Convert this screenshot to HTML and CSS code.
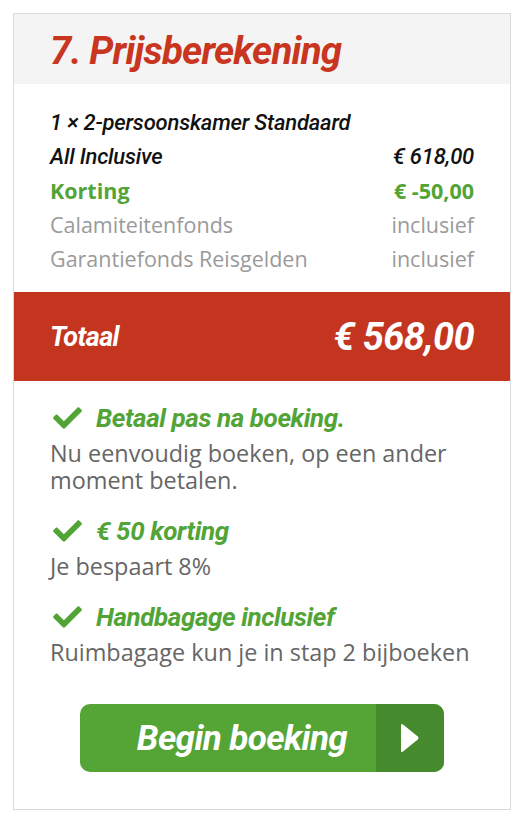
FILE: index.html
```html
<!DOCTYPE html>
<html lang="nl">
<head>
<meta charset="utf-8">
<title>Prijsberekening</title>
<link rel="stylesheet" href="styles.css">
</head>
<body>
<div class="page">
  <section class="card">
    <header class="card-head">
      <h2 class="title">7. Prijsberekening</h2>
    </header>
    <div class="lines">
      <div class="row strong"><span>1 × 2-persoonskamer Standaard</span></div>
      <div class="row strong"><span>All Inclusive</span><span>€ 618,00</span></div>
      <div class="row discount"><span>Korting</span><span>€ -50,00</span></div>
      <div class="row muted"><span>Calamiteitenfonds</span><span>inclusief</span></div>
      <div class="row muted"><span>Garantiefonds Reisgelden</span><span>inclusief</span></div>
    </div>
    <div class="total">
      <span class="total-label">Totaal</span>
      <span class="total-amount">€ 568,00</span>
    </div>
    <ul class="features">
      <li class="feature">
        <div class="feature-head">
          <svg class="check" viewBox="0 60 512 392" aria-hidden="true"><path d="M173.898 439.404l-166.4-166.4c-9.997-9.997-9.997-26.206 0-36.204l36.203-36.204c9.997-9.998 26.207-9.998 36.204 0L192 312.69 432.095 72.596c9.997-9.997 26.207-9.997 36.204 0l36.203 36.204c9.997 9.997 9.997 26.206 0 36.204l-294.4 294.401c-9.998 9.997-26.207 9.997-36.204-.001z"/></svg>
          <span>Betaal pas na boeking.</span>
        </div>
        <p class="feature-text">Nu eenvoudig boeken, op een ander moment betalen.</p>
      </li>
      <li class="feature">
        <div class="feature-head">
          <svg class="check" viewBox="0 60 512 392" aria-hidden="true"><path d="M173.898 439.404l-166.4-166.4c-9.997-9.997-9.997-26.206 0-36.204l36.203-36.204c9.997-9.998 26.207-9.998 36.204 0L192 312.69 432.095 72.596c9.997-9.997 26.207-9.997 36.204 0l36.203 36.204c9.997 9.997 9.997 26.206 0 36.204l-294.4 294.401c-9.998 9.997-26.207 9.997-36.204-.001z"/></svg>
          <span>€ 50 korting</span>
        </div>
        <p class="feature-text">Je bespaart 8%</p>
      </li>
      <li class="feature">
        <div class="feature-head">
          <svg class="check" viewBox="0 60 512 392" aria-hidden="true"><path d="M173.898 439.404l-166.4-166.4c-9.997-9.997-9.997-26.206 0-36.204l36.203-36.204c9.997-9.998 26.207-9.998 36.204 0L192 312.69 432.095 72.596c9.997-9.997 26.207-9.997 36.204 0l36.203 36.204c9.997 9.997 9.997 26.206 0 36.204l-294.4 294.401c-9.998 9.997-26.207 9.997-36.204-.001z"/></svg>
          <span>Handbagage inclusief</span>
        </div>
        <p class="feature-text">Ruimbagage kun je in stap 2 bijboeken</p>
      </li>
    </ul>
    <div class="actions">
      <a class="btn" href="#">
        <span class="btn-label">Begin boeking</span>
        <span class="btn-arrow">
          <svg viewBox="0 0 20 32" aria-hidden="true"><path d="M3 2.5 L17.5 14.2 Q19.5 16 17.5 17.8 L3 29.5 Q1 31 1 28.5 L1 3.5 Q1 1 3 2.5 Z"/></svg>
        </span>
      </a>
    </div>
  </section>
</div>
</body>
</html>
```

FILE: styles.css
```css
* { box-sizing: border-box; }
html, body { margin: 0; padding: 0; background: #fff; }
.page { padding: 13px 11px 13px 13px; }
.card {
  border: 1px solid #d9d9d9;
  background: #fff;
}
.card-head {
  background: #f4f4f4;
  height: 70px;
  padding: 0 36px;
  display: flex;
  align-items: center;
}
.title {
  margin: 0;
  font-family: Roboto, "Liberation Sans", sans-serif;
  font-style: italic;
  font-weight: 700;
  font-size: 38.5px;
  letter-spacing: -0.8px;
  color: #c8361f;
  line-height: 1;
  padding-top: 4px;
}
.lines { padding: 21px 36px 17px; }
.row {
  display: flex;
  justify-content: space-between;
  height: 34px;
  align-items: center;
}
.row.strong {
  font-family: Roboto, "Liberation Sans", sans-serif;
  font-style: italic;
  font-weight: 500;
  font-size: 22px;
  color: #111;
  letter-spacing: -0.2px;
}
.row.discount {
  font-family: "Open Sans", "Liberation Sans", sans-serif;
  font-weight: 700;
  font-size: 21.5px;
  color: #52a436;
}
.row.muted {
  font-family: "Open Sans", "Liberation Sans", sans-serif;
  font-weight: 400;
  font-size: 21.5px;
  color: #9a9a9a;
}
.total {
  background: #c4351f;
  height: 89px;
  padding: 0 36px;
  display: flex;
  justify-content: space-between;
  align-items: center;
  color: #fff;
  font-family: Roboto, "Liberation Sans", sans-serif;
  font-style: italic;
  font-weight: 700;
}
.total-label { font-size: 27px; letter-spacing: -0.6px; }
.total-amount { font-size: 38px; letter-spacing: -0.6px; }
.features {
  list-style: none;
  margin: 0;
  padding: 20px 36px 0;
}
.feature + .feature { margin-top: 20px; }
.feature-head {
  display: flex;
  align-items: center;
  height: 34px;
  gap: 14px;
  padding-left: 3px;
  color: #52a436;
  font-family: Roboto, "Liberation Sans", sans-serif;
  font-style: italic;
  font-weight: 700;
  font-size: 26px;
  letter-spacing: -0.4px;
}
.check { width: 29px; height: 22px; fill: #52a436; flex: none; }
.feature-text {
  margin: 5px 0 0;
  font-family: "Open Sans", "Liberation Sans", sans-serif;
  font-size: 23.4px;
  line-height: 27px;
  color: #666;
}
.actions {
  display: flex;
  justify-content: center;
  padding: 38px 0 37px;
}
.btn {
  display: flex;
  width: 364px;
  height: 68px;
  border-radius: 10px;
  overflow: hidden;
  text-decoration: none;
  background: #54a436;
}
.btn-label {
  flex: 1;
  display: flex;
  align-items: center;
  justify-content: center;
  padding-left: 28px;
  color: #fff;
  font-family: Roboto, "Liberation Sans", sans-serif;
  font-style: italic;
  font-weight: 700;
  font-size: 35px;
  letter-spacing: -0.6px;
}
.btn-arrow {
  width: 68px;
  background: #458a2c;
  display: flex;
  align-items: center;
  justify-content: center;
}
.btn-arrow svg { width: 20px; height: 32px; fill: #fff; }
```
